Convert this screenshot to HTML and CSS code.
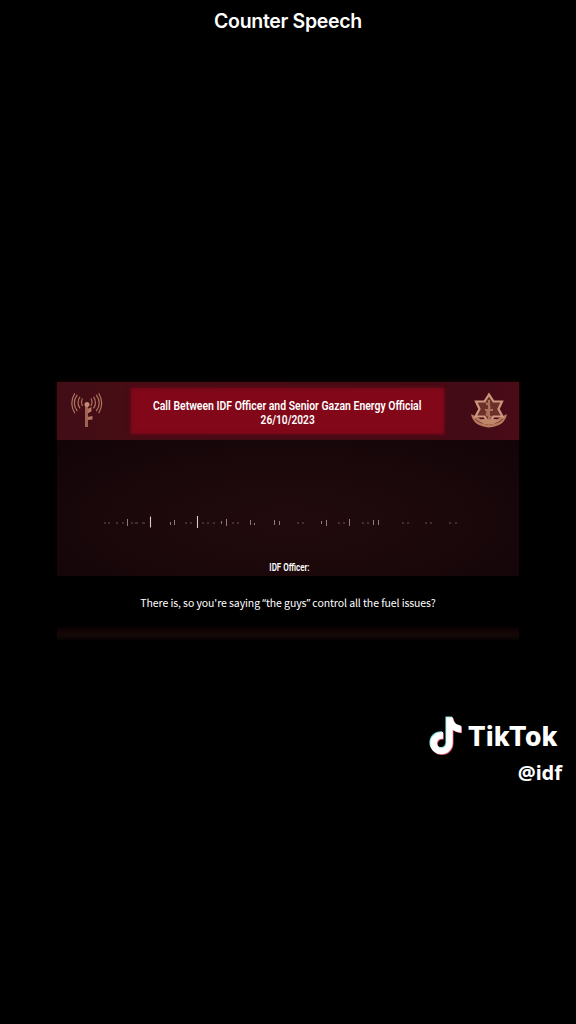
FILE: index.html
```html
<!DOCTYPE html>
<html lang="en">
<head>
<meta charset="utf-8">
<title>Counter Speech</title>
<link rel="stylesheet" href="styles.css">
</head>
<body>
<main class="screen">
  <h1 class="title">Counter Speech</h1>
  <section class="video">
    <header class="banner">
      <svg class="antenna" viewBox="0 0 32 38" fill="none" stroke="#b0735f" stroke-width="1.200">
        <path d="M11.500 8.500q-2 3.500 0 7.500M9 6.800q-4 5.500 0 11.500M6.300 4.800q-6 8 0 16.400M3.800 3.200q-6 10 0 20M20 8.500q2 3.500 0 7.500M22.500 6.800q4 5.500 0 11.500M25.200 4.800q6 8 0 16.400M27.700 3.200q6 10 0 20"/>
        <path d="M15.500 14v23" stroke="#a06353" stroke-width="3"/>
        <circle cx="16" cy="14.500" r="2.500" fill="#c98975" stroke="none"/>
        <path d="M16.500 19l4-2v4.500l-4 2M16.500 27l5-1v3.500l-5 .5" fill="#b77562" stroke="none"/>
      </svg>
      <div class="heading">
        <p class="call">Call Between IDF Officer and Senior Gazan Energy Official</p>
        <p class="date">26/10/2023</p>
      </div>
      <svg class="emblem" viewBox="0 0 38 38" fill="none">
        <path d="M1 23q2 12 18 13.500 16-1.500 18-13.500l-6 3q-12 8-24 0z" fill="#b97a60"/>
        <path d="M5 28q5 5 14 5t14-5" stroke="#74352d"/>
        <path d="M19 3.500l4.500 7H32L28.500 18l4 7.500h-9L19 32l-4.500-6.500h-9l4-7.500L6 10.500h8.500z" fill="#6b302a" stroke="#cf977d" stroke-width="2.200"/>
        <path d="M19 9v20M16 12q6 3 2 8t4 6M15 19h8" stroke="#ad705d" stroke-width="2"/>
        <path d="M9 30q5-4 10-1 5-3 10 1l-5 3H14z" fill="#c0866b"/>
      </svg>
    </header>
    <div class="stage">
      <svg class="wave" viewBox="90 510 390 24" stroke="#b5a0a2">
        <path d="M104 523h2M108 523h2M116 523h2M122 523h2M131 523h2M135 523h3M142 523h3M185 523h2M190 523h2M202 523h2M207 523h2M213 523h2M232 523h2M237 523h2M297 523h2M302 523h2M338 523h2M343 523h2M362 523h2M367 523h2M402 523h2M407 523h2M425 523h2M430 523h2M449 523h2M455 523h2" opacity=".5"/>
        <path d="M127.500 519v7M174.500 520v5M226.500 519v7M250.500 520v5M274.500 520v5M279.500 521v4M326.500 520v6M349.500 519v7M373.500 520v5M378.500 520v5M321.500 521v3M170.500 522v3M221.500 521v3M254.500 523v2" opacity=".75"/>
        <path d="M150.500 516.500v11M197.500 516v12" stroke="#dbcaca" stroke-width="1.100"/>
      </svg>
      <p class="speaker">IDF Officer:</p>
    </div>
    <p class="subtitle">There is, so you're saying <span class="quote">“</span>the guys<span class="quote">”</span> control all the fuel issues?</p>
    <div class="strip"></div>
  </section>
  <footer class="watermark">
    <div class="brand">
      <svg class="note" viewBox="0 0 36 40">
        <defs><path id="n" d="M17 1h6.500c.6 5 3.500 8 8.500 8.600v6.600c-3.300 0-6.100-1-8.500-2.700V26c0 7.500-5.300 12-11.500 12C5.500 38 1 33 1 27c0-7 5.500-11.700 12.800-11.300v6.800c-3.300-.6-6 1.300-6 4.400 0 2.700 2 4.600 4.400 4.600 3 0 4.800-2.100 4.800-5.100z"/></defs>
        <use href="#n" x=".4" y="-.4" fill="#68d9d2"/>
        <use href="#n" x="2" y="1" fill="#df5267"/>
        <use href="#n" x="1.200" y=".3" fill="#fff"/>
      </svg>
      <span class="name">TikTok</span>
    </div>
    <p class="handle">@idf</p>
  </footer>
</main>
</body>
</html>
```
FILE: styles.css
```css
* { box-sizing: border-box; }
body, h1, p { margin: 0; }
body { background: #000; color: #fff; }
.screen {
  width: 576px;
  height: 1024px;
  overflow: hidden;
  display: flex;
  flex-direction: column;
  align-items: center;
  background: #000;
}
.title {
  height: 382px;
  padding-top: 9px;
  font: 600 19.5px/24px Inter, sans-serif;
  letter-spacing: -.3px;
  white-space: nowrap;
}
.video {
  width: 462px;
  height: 258px;
  display: flex;
  flex-direction: column;
}
.banner {
  height: 58px;
  display: flex;
  align-items: center;
  background: linear-gradient(90deg, #400d17, #460d14 12%, #430b15 90%, #4a0b18);
  box-shadow: 0 0 3px #30080d;
}
.antenna { width: 32px; height: 38px; margin: 0 28px 4px 14px; flex: none; }
.emblem { width: 38px; height: 38px; margin-left: 26px; margin-bottom: 2px; flex: none; }
.heading {
  width: 313px;
  height: 46px;
  flex: none;
  display: flex;
  flex-direction: column;
  align-items: center;
  padding-top: 11px;
  background: #820819;
  box-shadow: 0 0 4px 1px #650818, inset 0 0 4px #690818;
  text-align: center;
}
.call, .date, .speaker { font-family: Roboto, sans-serif; font-weight: 600; white-space: nowrap; }
.call { font-size: 13px; line-height: 14px; transform: scaleX(.803); }
.date { font-size: 13px; line-height: 14px; transform: scaleX(.78); }
.stage {
  height: 136px;
  display: flex;
  flex-direction: column;
  align-items: center;
  padding-top: 70px;
  background: radial-gradient(ellipse at 50% 60%, #210a0d, #1b080b 50%, #120407 100%);
}
.wave { width: 390px; height: 24px; flex: none; margin-right: 6px; }
.speaker { margin: 27px 0 0 2px; font-size: 10.5px; line-height: 14px; transform: scaleX(.76); }
.subtitle {
  height: 51px;
  padding-top: 18px;
  background: #000;
  font: 400 10.5px/18px "Noto Sans CJK SC", "Noto Sans", sans-serif;
  letter-spacing: -.09px;
  text-align: center;
  white-space: nowrap;
}
.quote { font-family: "Noto Sans", sans-serif; line-height: 1; }
.strip { height: 13px; background: linear-gradient(#0a0001, #140506 40%, #140708 70%, #050102); }
.watermark {
  align-self: flex-end;
  display: flex;
  flex-direction: column;
  align-items: flex-end;
  margin-top: 74px;
  padding-right: 14px;
}
.brand { display: flex; height: 43px; align-items: center; padding-right: 4px; }
.note { width: 36px; height: 40px; margin-right: 4px; }
.name { font: 800 26.5px/30px Inter, sans-serif; letter-spacing: .45px; }
.handle { margin-top: 3px; font: 700 20px/26px "Noto Sans", sans-serif; }
```
